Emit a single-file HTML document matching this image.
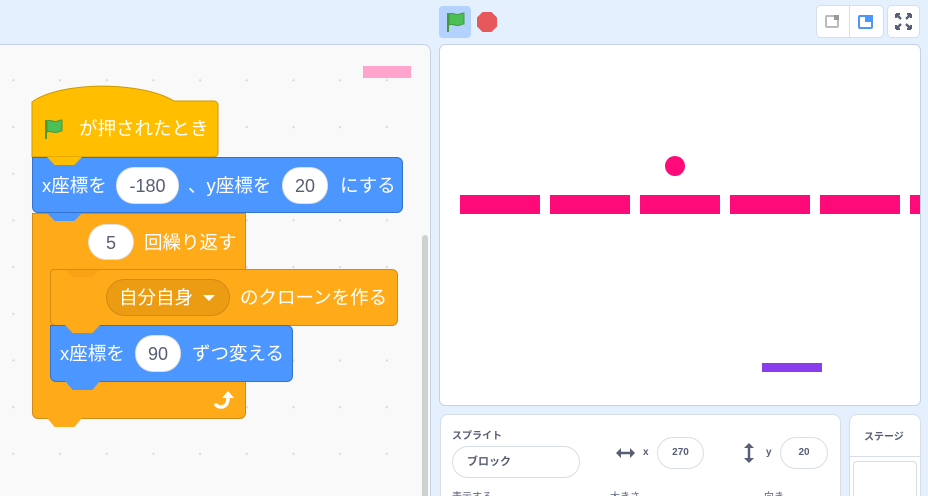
<!DOCTYPE html>
<html><head><meta charset="utf-8"><style>
*{margin:0;padding:0;box-sizing:border-box}
html,body{width:928px;height:496px;overflow:hidden}
body{background:#e5f0ff;font-family:"Liberation Sans","Noto Sans CJK JP",sans-serif;position:relative}
.a{position:absolute}
.code{left:0;top:44px;width:431px;height:452px;background:#f9f9f9;border-top:1px solid #c6d2e4;border-right:1px solid #c6d2e4;border-radius:0 8px 0 0;
background-image:radial-gradient(circle,#d8d8d8 1px,transparent 1.3px);background-size:46.7px 46.7px;background-position:-10px 12px}
.blk{position:absolute;border-radius:6px}
.t{position:absolute;color:#fff;font-size:18.5px;line-height:20px;white-space:nowrap}
.ov{position:absolute;background:#fff;border-radius:18px;color:#575e75;font-size:18px;text-align:center;line-height:36px;border:1px solid rgba(0,0,0,.12)}
.tab{position:absolute;height:8px;clip-path:polygon(0 0,100% 0,78% 100%,22% 100%)}
</style></head><body>
<div class="a" style="left:439px;top:6px;width:32px;height:32px;background:#b3d3fe;border-radius:4px"></div>
<svg class="a" style="left:444px;top:10px" width="24" height="24" viewBox="0 0 24 24"><path d="M4 3v19" stroke="#45993d" stroke-width="2"/><path d="M5 4c4-2 7 2 11 0c2-1 4-1 4-1v11c0 0-2 0-4 1c-4 2-7-2-11 0z" fill="#4cbf56" stroke="#45993d"/></svg>
<svg class="a" style="left:476px;top:11px" width="22" height="22"><polygon points="6.5,1 15.5,1 21,6.5 21,15.5 15.5,21 6.5,21 1,15.5 1,6.5" fill="#e6585c"/></svg>
<div class="a" style="left:816px;top:5px;width:68px;height:33px;background:#fff;border:1px solid #d9dde6;border-radius:5px"></div>
<div class="a" style="left:849px;top:5px;width:1px;height:33px;background:#d9dde6"></div>
<div class="a" style="left:825px;top:15px;width:14px;height:13px;border:2px solid #bbb;border-radius:2px"></div>
<div class="a" style="left:834px;top:15px;width:5px;height:5px;background:#999"></div>
<div class="a" style="left:858px;top:15px;width:15px;height:14px;border:2px solid #4c97ff;border-radius:2px"></div>
<div class="a" style="left:865px;top:15px;width:8px;height:7px;background:#4c97ff"></div>
<div class="a" style="left:887px;top:5px;width:33px;height:33px;background:#fff;border:1px solid #d9dde6;border-radius:5px"></div>
<svg class="a" style="left:895px;top:13px" width="17" height="17" viewBox="0 0 17 17" fill="none" stroke="#575e75" stroke-width="2.3"><path d="M1 1l5 5M1 1v4M1 1h4M16 1l-5 5M16 1v4M16 1h-4M1 16l5-5M1 16v-4M1 16h4M16 16l-5-5M16 16v-4M16 16h-4"/></svg>

<div class="a code"></div>
<div class="a" style="left:422px;top:235px;width:6px;height:270px;background:#d0d0d0;border-radius:3px"></div>
<div class="a" style="left:363px;top:66px;width:48px;height:12px;background:#ffa4cc"></div>

<svg class="a" style="left:31px;top:81px" width="190" height="78"><path d="M1 21C30 0 110 0 143 20H183a4 4 0 0 1 4 4V72a4 4 0 0 1-4 4H1z" fill="#ffbf00" stroke="#cc9900"/></svg>
<svg class="a" style="left:43px;top:117px" width="24" height="24" viewBox="0 0 24 24"><path d="M3 3v19" stroke="#45993d" stroke-width="2"/><path d="M4 4c4-2 7 2 11 0c2-1 4-1 4-1v11c0 0-2 0-4 1c-4 2-7-2-11 0z" fill="#4cbf56" stroke="#45993d"/></svg>
<div class="t" style="left:79px;top:119px">が押されたとき</div>

<div class="blk" style="left:32px;top:157px;width:371px;height:56px;background:#4c97ff;border:1px solid #3373cc;border-radius:0 6px 6px 6px"></div>
<div class="tab" style="left:47px;top:157px;width:35px;background:#ffbf00"></div>
<div class="t" style="left:42px;top:176px">x座標を</div>
<div class="ov" style="left:116px;top:167px;width:63px;height:37px">-180</div>
<div class="t" style="left:188px;top:176px">、y座標を</div>
<div class="ov" style="left:282px;top:167px;width:46px;height:37px">20</div>
<div class="t" style="left:340px;top:176px">にする</div>

<div class="blk" style="left:32px;top:213px;width:214px;height:206px;background:#ffab19;border:1px solid #cf8b17;border-radius:0 0 6px 6px"></div>
<div class="tab" style="left:47px;top:213px;width:35px;background:#4c97ff"></div>
<div class="tab" style="left:47px;top:418px;width:35px;background:#ffab19;height:9px"></div>
<div class="ov" style="left:88px;top:224px;width:46px;height:36px">5</div>
<div class="t" style="left:144px;top:233px">回繰り返す</div>
<svg class="a" style="left:213px;top:389px" width="24" height="22" viewBox="0 0 24 22"><path d="M3 16c5 4 12 2 12-7" fill="none" stroke="#fff" stroke-width="3.5" stroke-linecap="round"/><path d="M9 9l6-7 6 7z" fill="#fff"/></svg>

<div class="blk" style="left:50px;top:269px;width:348px;height:57px;background:#ffab19;border:1px solid #cf8b17;border-radius:4px 6px 6px 6px"></div>
<div class="tab" style="left:65px;top:270px;width:35px;background:#f9a215;height:7px"></div>
<div class="a" style="left:106px;top:279px;width:124px;height:37px;background:#ec9c13;border:1px solid #cf8b17;border-radius:19px"></div>
<div class="t" style="left:119px;top:288px">自分自身</div>
<div class="a" style="left:203px;top:295px;width:0;height:0;border-left:6px solid transparent;border-right:6px solid transparent;border-top:6px solid #fff"></div>
<div class="t" style="left:240px;top:288px">のクローンを作る</div>

<div class="blk" style="left:50px;top:325px;width:243px;height:57px;background:#4c97ff;border:1px solid #3373cc;border-radius:0 6px 6px 6px"></div>
<div class="tab" style="left:65px;top:325px;width:35px;background:#ffab19"></div>
<div class="tab" style="left:65px;top:381px;width:35px;background:#4c97ff;height:9px"></div>
<div class="t" style="left:60px;top:344px">x座標を</div>
<div class="ov" style="left:135px;top:335px;width:46px;height:37px">90</div>
<div class="t" style="left:192px;top:344px">ずつ変える</div>

<div class="a" style="left:439px;top:44px;width:482px;height:362px;background:#fff;border:1px solid #c6d2e4;border-radius:6px"></div>
<div class="a" style="left:460px;top:195px;width:80px;height:19px;background:#ff0a78"></div>
<div class="a" style="left:550px;top:195px;width:80px;height:19px;background:#ff0a78"></div>
<div class="a" style="left:640px;top:195px;width:80px;height:19px;background:#ff0a78"></div>
<div class="a" style="left:730px;top:195px;width:80px;height:19px;background:#ff0a78"></div>
<div class="a" style="left:820px;top:195px;width:80px;height:19px;background:#ff0a78"></div>
<div class="a" style="left:910px;top:195px;width:10px;height:19px;background:#ff0a78"></div>
<div class="a" style="left:665px;top:156px;width:20px;height:20px;background:#ff0a78;border-radius:50%"></div>
<div class="a" style="left:762px;top:363px;width:60px;height:9px;background:#8a3ded"></div>

<div class="a" style="left:440px;top:414px;width:401px;height:90px;background:#fff;border:1px solid #d9dde6;border-radius:8px"></div>
<div class="a" style="left:452px;top:427px;font-size:10px;font-weight:bold;color:#575e75">スプライト</div>
<div class="a" style="left:452px;top:446px;width:128px;height:32px;border:1px solid #d9dde6;border-radius:16px;font-size:11px;font-weight:bold;color:#575e75;line-height:30px;padding-left:14px">ブロック</div>
<svg class="a" style="left:616px;top:447px" width="19" height="12" viewBox="0 0 19 12"><path d="M3 6h13" stroke="#575e75" stroke-width="2.5"/><path d="M0 6l5-5v10zM19 6l-5-5v10z" fill="#575e75"/></svg>
<div class="a" style="left:643px;top:447px;font-size:10px;font-weight:bold;color:#575e75">x</div>
<div class="a" style="left:657px;top:437px;width:47px;height:32px;border:1px solid #d9dde6;border-radius:16px;font-size:10px;font-weight:bold;color:#575e75;line-height:30px;text-align:center">270</div>
<svg class="a" style="left:743px;top:443px" width="12" height="20" viewBox="0 0 12 20"><path d="M6 3v14" stroke="#575e75" stroke-width="2.5"/><path d="M6 0l5 5H1zM6 20l5-5H1z" fill="#575e75"/></svg>
<div class="a" style="left:766px;top:447px;font-size:10px;font-weight:bold;color:#575e75">y</div>
<div class="a" style="left:780px;top:437px;width:48px;height:32px;border:1px solid #d9dde6;border-radius:16px;font-size:10px;font-weight:bold;color:#575e75;line-height:30px;text-align:center">20</div>
<div class="a" style="left:452px;top:488px;font-size:10px;color:#575e75">表示する</div>
<div class="a" style="left:610px;top:488px;font-size:10px;color:#575e75">大きさ</div>
<div class="a" style="left:764px;top:488px;font-size:10px;color:#575e75">向き</div>

<div class="a" style="left:849px;top:414px;width:72px;height:90px;background:#fff;border:1px solid #d9dde6;border-radius:8px"></div>
<div class="a" style="left:849px;top:456px;width:72px;height:1px;background:#d9dde6"></div>
<div class="a" style="left:864px;top:428px;font-size:10px;font-weight:bold;color:#575e75">ステージ</div>
<div class="a" style="left:853px;top:461px;width:64px;height:40px;border:1px solid #d9dde6;border-radius:4px;background:#fff"></div>
</body></html>
